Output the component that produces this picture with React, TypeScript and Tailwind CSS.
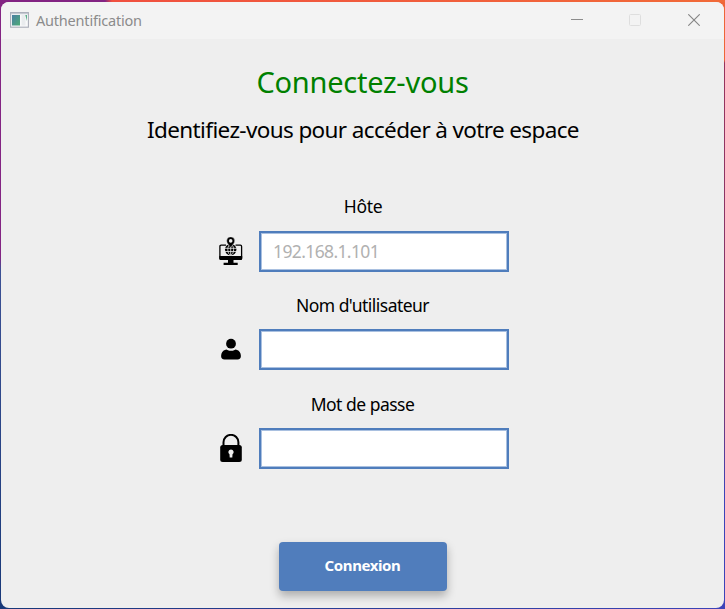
import React from "react";

function HostIcon() {
  return (
    <svg width="24" height="30" viewBox="0 0 24 30" fill="none">
      <path d="M7 8.2H2.1Q.9 8.2 .9 9.4V21Q.9 22.3 2.1 22.3H21.4Q22.6 22.3 22.6 21V9.4Q22.6 8.2 21.4 8.2H16.5" stroke="#000" strokeWidth="1.3" />
      <path d="M.3 19H23.2V21.5Q23.2 23 21.7 23H1.8Q.3 23 .3 21.5Z" fill="#000" />
      <path d="M9 22.5h5.5v3.3h4.2V28H4.6v-2.2H9z" fill="#000" />
      <circle cx="11.7" cy="12.6" r="5.7" fill="#000" />
      <path d="M6 11.3h11.5M6 14.5h11.5M11.7 9v9.5" stroke="#eee" strokeWidth=".8" />
      <ellipse cx="11.7" cy="12.6" rx="2.9" ry="5.4" stroke="#eee" strokeWidth=".8" />
      <path d="M11.7 10.6C9.5 7.4 7.7 5.9 7.7 3.9a4 4 0 0 1 8 0C15.7 5.9 13.9 7.4 11.7 10.6Z" fill="#000" stroke="#eee" strokeWidth=".4" />
      <circle cx="11.7" cy="3.9" r="1.8" fill="#eee" />
    </svg>
  );
}

function UserIcon() {
  return (
    <svg width="24" height="30" viewBox="0 0 24 30">
      <circle cx="12" cy="8.7" r="4.9" fill="#000" />
      <path d="M6.6 14.8Q7.6 14.4 8.4 14.9 12 16.7 15.6 14.9 16.4 14.4 17.4 14.8 21.8 15.9 21.9 21.1 21.9 24.5 18.5 24.5H5.5Q2.1 24.5 2.1 21.1 2.2 15.9 6.6 14.8Z" fill="#000" />
    </svg>
  );
}

function LockIcon() {
  return (
    <svg width="24" height="30" viewBox="0 0 24 30">
      <path d="M4.5 12V8.3a7.4 7.4 0 0 1 14.9 0V12" fill="none" stroke="#000" strokeWidth="2" />
      <rect x="1.2" y="11" width="21.6" height="17" rx="2.5" fill="#000" />
      <path d="M12 15.4a2.7 2.7 0 0 0-1.5 4.9L10.7 23.4h2.6l.2-3.1A2.7 2.7 0 0 0 12 15.4Z" fill="#eee" />
    </svg>
  );
}

function TitleBar() {
  return (
    <header className="flex h-[37px] shrink-0 items-center bg-[#f3f3f3] pl-[9px]">
      <svg width="19" height="16" viewBox="0 0 19 16" className="mb-px shrink-0">
        <defs>
          <linearGradient id="pane" x1="0" y1="0" x2="1" y2="1">
            <stop offset="0" stopColor="#4b7fa3" />
            <stop offset="1" stopColor="#4dab76" />
          </linearGradient>
        </defs>
        <rect x=".6" y=".6" width="17.8" height="14.6" fill="#f8f9fa" stroke="#a9adb8" strokeWidth="1.1" />
        <path d="M1 1.7h17" stroke="#bcc1ca" />
        <rect x="2" y="3" width="8" height="10.5" fill="url(#pane)" />
        <rect x="11.5" y="3" width="4" height="10.5" fill="#e9ecee" />
        <path d="M15.3 3h1.7v6z" fill="#5aaf88" />
      </svg>
      <span className="ml-[7px] text-[14.5px] tracking-[-0.2px] text-[#8b8b8b]">Authentification</span>
      <div className="mb-px ml-auto flex items-center pr-[24px]">
        <svg className="mr-[46px]" width="12" height="12" viewBox="0 0 12 12"><path d="M0 5.5h12" stroke="#8c8c8c" /></svg>
        <svg className="mr-[47px]" width="12" height="12" viewBox="0 0 12 12"><rect x=".5" y=".5" width="11" height="11" rx="1" fill="none" stroke="#dedede" /></svg>
        <svg width="12" height="12" viewBox="0 0 12 12"><path d="M.3.3l11.4 11.4M11.7.3L.3 11.7" stroke="#858585" strokeWidth="1.1" /></svg>
      </div>
    </header>
  );
}

interface FieldProps {
  label: string;
  labelClass: string;
  icon: React.ReactNode;
  placeholder?: string;
  type?: string;
}

function Field({ label, labelClass, icon, placeholder, type = "text" }: FieldProps) {
  return (
    <div className="flex h-[99px] w-full flex-col items-center">
      <label className={`whitespace-nowrap text-[17.5px] leading-[24px] text-black ${labelClass}`}>{label}</label>
      <div className="flex items-center gap-4 pl-[3px]">
        {icon}
        <input
          type={type}
          aria-label={label}
          placeholder={placeholder}
          className="h-[41px] w-[250px] border-2 border-[#4f7dbc] bg-white pb-[2px] pl-[12px] text-[17.5px] tracking-[-0.62px] shadow-[inset_0_0_0_1px_#a9c0e0] outline-none placeholder:text-[#b1b1b1]"
        />
      </div>
    </div>
  );
}

export default function App() {
  return (
    <div className="flex h-[609px] w-[725px] flex-col bg-[linear-gradient(to_right,#832483_105px,#f0503f_112px,#f16a38)] font-['Noto_Sans',sans-serif]">
      <div className="mt-[2px] grid flex-1 grid-cols-[1px_723px_1px] bg-[linear-gradient(to_right,#183878,#3c43b8)]">
        <div className="-mr-[8px] bg-[linear-gradient(to_bottom,#832483_255px,#3c5195_268px,#183878)]" />
        <div className="z-10 flex pb-px">
          <main className="flex w-full flex-col overflow-hidden rounded-[8px] bg-[#eeeeee]">
            <TitleBar />
            <div className="flex flex-1 flex-col items-center">
              <h1 className="mt-[23px] h-[41px] whitespace-nowrap text-[29px] leading-[40px] tracking-[-0.25px] text-[#008000]">Connectez-vous</h1>
              <p className="mt-[11px] h-[32px] whitespace-nowrap pl-px text-[22.5px] leading-[32px] tracking-[-0.63px] text-black">Identifiez-vous pour accéder à votre espace</p>
              <div className="mt-[48px] flex w-full flex-col">
                <Field label="Hôte" labelClass="h-[37px] pl-px tracking-[-0.3px]" icon={<HostIcon />} placeholder="192.168.1.101" />
                <Field label="Nom d'utilisateur" labelClass="h-[36px] tracking-[-0.53px]" icon={<UserIcon />} />
                <Field label="Mot de passe" labelClass="h-[36px] tracking-[-0.5px]" icon={<LockIcon />} type="password" />
              </div>
              <button className="mt-[51px] h-[49px] w-[168px] rounded-[4px] bg-[#507dbc] pb-[2px] text-[15px] font-bold tracking-[-0.4px] text-white shadow-[0_5px_10px_rgba(0,0,0,0.28)]">Connexion</button>
            </div>
          </main>
        </div>
        <div className="-ml-[8px] bg-[linear-gradient(to_bottom,#ee6538_58px,#98335c_61px,#7b3570_400px,#3c43b8_490px)]" />
      </div>
    </div>
  );
}
